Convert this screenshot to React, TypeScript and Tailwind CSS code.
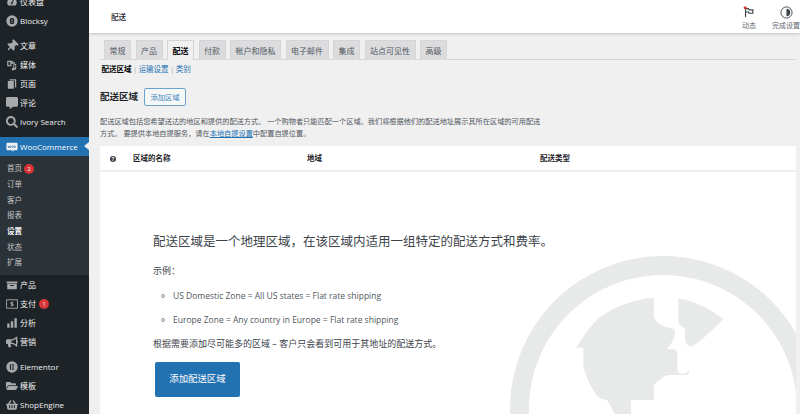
import React from "react";
import { FaThumbtack, FaCommentAlt, FaSearch, FaBullhorn, FaFolderOpen, FaShoppingBasket } from "react-icons/fa";

const I = ({ children }: { children: React.ReactNode }) => (
  <svg viewBox="0 0 20 20" className="w-[12px] h-[12px] fill-[#a7aaad]">{children}</svg>
);

const Dash = () => <I><path d="M10 3a8 8 0 0 0-8 8c0 2 .8 3.800 2 5h12a8 8 0 0 0 2-5 8 8 0 0 0-8-8zm1 9a1.500 1.500 0 1 1-2-1l3-5 1 .5z" /></I>;
const Blocksy = () => (
  <svg viewBox="0 0 20 20" className="w-[12px] h-[12px]">
    <circle cx="10" cy="10" r="9.500" fill="#a7aaad" />
    <rect x="6.500" y="5" width="7" height="10" rx="2.500" fill="#1d2327" />
    <rect x="8.800" y="7.300" width="2.400" height="1.800" fill="#a7aaad" />
    <rect x="8.800" y="11" width="2.400" height="1.800" fill="#a7aaad" />
  </svg>
);
const Media = () => <I><path d="M2 3h9v2.500h4V3h0v5H9v4H2zM4 5v5h3V5zM12 9l5-1v8a2 2 0 1 1-1.500-1.900V10l-2 .4V17a2 2 0 1 1-1.500-1.900z" /></I>;
const Pages = () => <I><path d="M6 2h11v14h-2V4H6zM3 5h10v13H3z" /></I>;
const Box = () => <I><path d="M1 4h18v3H1zM2 8h16v9H2zm5 2v1.500h6V10z" /></I>;
const Pay = () => (
  <svg viewBox="0 0 20 20" className="w-[12px] h-[12px] fill-none stroke-[#a7aaad]" strokeWidth="1.500">
    <rect x="1" y="3" width="18" height="14" />
    <path d="M12 7.500H9a1.200 1.200 0 0 0 0 2.500h2a1.200 1.200 0 0 1 0 2.500H8M10 6v8" />
  </svg>
);
const Bars = () => <I><path d="M2 11h4v7H2zM8 7h4v11H8zM14 2h4v16h-4z" /></I>;
const Elem = () => (
  <svg viewBox="0 0 20 20" className="w-[12px] h-[12px]">
    <circle cx="10" cy="10" r="9.500" fill="#a7aaad" />
    <path d="M6.500 5.500h2v9h-2zM10 5.500h3.500v2H10zM10 9h3.500v2H10zM10 12.500h3.500v2H10z" fill="#1d2327" />
  </svg>
);
const Woo = () => (
  <svg viewBox="0 0 20 20" className="w-[12px] h-[12px]">
    <path d="M2.500 3h15A1.800 1.800 0 0 1 19.300 4.800v9a1.800 1.800 0 0 1-1.800 1.800H12l.8 2.400-3.600-2.400H2.500A1.800 1.800 0 0 1 .7 13.800v-9A1.800 1.800 0 0 1 2.500 3z" fill="#f0f0f1" />
    <path d="M3.500 7.500l1 4 1.500-3 1 3 1.300-4M10 9.500a1.100 1.500 0 1 0 2.200 0a1.100 1.500 0 1 0-2.200 0M13.500 9.500a1.100 1.500 0 1 0 2.200 0a1.100 1.500 0 1 0-2.200 0" fill="none" stroke="#2271b1" strokeWidth="1" />
  </svg>
);

const fa = "w-[12px] h-[12px] text-[#a7aaad]";

const Row = ({ icon, label, badge }: { icon: React.ReactNode; label: string; badge?: string }) => (
  <div className="h-[19px] flex items-center text-[8px] text-[#f0f0f1]">
    <span className="w-[20px] pl-[4px] flex justify-center shrink-0">{icon}</span>
    <span>{label}</span>
    {badge && <span className="ml-[3px] w-[10px] h-[10px] rounded-full bg-[#d63638] text-white text-[5.500px] flex items-center justify-center">{badge}</span>}
  </div>
);

const Sub = ({ label, active, badge }: { label: string; active?: boolean; badge?: string }) => (
  <div className={active ? "h-[15.700px] pl-[7px] flex items-center text-[7.500px] text-white font-bold" : "h-[15.700px] pl-[7px] flex items-center text-[7.500px] text-[#c3c4c7]"}>
    <span>{label}</span>
    {badge && <span className="ml-[2px] w-[10px] h-[10px] rounded-full bg-[#d63638] text-white text-[5.500px] flex items-center justify-center">{badge}</span>}
  </div>
);

const tabs = ["常规", "产品", "配送", "付款", "帐户和隐私", "电子邮件", "集成", "站点可见性", "高级"];

export default function App() {
  return (
    <div className="w-[800px] h-[414px] overflow-hidden flex bg-[#f0f0f1] font-['Open_Sans','Noto_Sans_CJK_SC',sans-serif] text-[#3c434a]">
      <aside className="w-[89px] shrink-0 bg-[#1d2327] -mt-[8px] h-[430px] flex flex-col">
        <Row icon={<Dash />} label="仪表盘" />
        <Row icon={<Blocksy />} label="Blocksy" />
        <div className="h-[6px]" />
        <Row icon={<FaThumbtack className={`${fa} rotate-45`} />} label="文章" />
        <Row icon={<Media />} label="媒体" />
        <Row icon={<Pages />} label="页面" />
        <Row icon={<FaCommentAlt className={fa} />} label="评论" />
        <Row icon={<FaSearch className={fa} />} label="Ivory Search" />
        <div className="h-[6px]" />
        <div className="relative h-[19px] bg-[#2271b1] flex items-center text-[8px] text-white">
          <span className="w-[20px] pl-[4px] flex justify-center shrink-0"><Woo /></span>
          <span>WooCommerce</span>
          <span className="absolute right-0 top-[5px] w-0 h-0 border-y-[4.500px] border-y-transparent border-r-[5px] border-r-[#f0f0f1]" />
        </div>
        <div className="bg-[#2c3338] pt-[5px] pb-[4.500px]">
          <Sub label="首页" badge="2" />
          <Sub label="订单" />
          <Sub label="客户" />
          <Sub label="报表" />
          <Sub label="设置" active />
          <Sub label="状态" />
          <Sub label="扩展" />
        </div>
        <Row icon={<Box />} label="产品" />
        <Row icon={<Pay />} label="支付" badge="1" />
        <Row icon={<Bars />} label="分析" />
        <Row icon={<FaBullhorn className={fa} />} label="营销" />
        <div className="h-[6px]" />
        <Row icon={<Elem />} label="Elementor" />
        <Row icon={<FaFolderOpen className={fa} />} label="模板" />
        <Row icon={<FaShoppingBasket className={fa} />} label="ShopEngine" />
      </aside>

      <main className="flex-1 min-w-0 flex flex-col">
        <header className="relative z-10 h-[33px] shrink-0 bg-white shadow-[0_1px_3px_rgba(0,0,0,0.2)] flex items-center justify-between pl-[22px]">
          <span className="text-[7.500px] font-medium text-[#1d2327] mt-[2px]">配送</span>
          <div className="flex items-start pt-[4px]">
            <div className="w-[36px] flex flex-col items-center gap-[3px] text-[7px] text-[#646970]">
              <svg viewBox="0 0 14 14" className="w-[12px] h-[12px]">
                <path d="M3 2.500V13M3 3h3.500l.5 1.500h4.500v4H7l-.5-1.500H3" fill="none" stroke="#3c434a" strokeWidth="1.300" />
                <circle cx="2.500" cy="2" r="1.800" fill="#d63638" />
              </svg>
              <span>动态</span>
            </div>
            <div className="w-[5px]" />
            <div className="w-[28px] flex flex-col items-center gap-[2px] text-[7px] text-[#646970]">
              <svg viewBox="0 0 14 14" className="w-[13px] h-[13px]">
                <circle cx="7" cy="7" r="6" fill="none" stroke="#3c434a" strokeWidth="1" />
                <path d="M7 3a4 4 0 0 1 0 8z" fill="#3c434a" />
              </svg>
              <span className="whitespace-nowrap">完成设置</span>
            </div>
          </div>
        </header>

        <div className="pl-[11px] pr-[4px] flex-1 flex flex-col min-h-0">
          <nav className="mt-[7px] h-[20px] shrink-0 flex gap-[4.500px] pl-[4px] border-b border-[#d5d5d5]">
            {tabs.map((t) => (
              <span
                key={t}
                className={
                  t === "配送"
                    ? "h-[20px] px-[4.500px] flex items-center text-[8px] font-bold text-black bg-[#f0f0f1] border border-b-0 border-[#d5d5d5]"
                    : "h-[20px] px-[4.500px] flex items-center text-[8px] text-[#50575e] bg-[#dcdcde] border border-b-0 border-[#d5d5d5]"
                }
              >
                {t}
              </span>
            ))}
          </nav>

          <div className="mt-[4px] ml-[1.500px] h-[12px] flex items-center text-[7.500px] text-[#2271b1] shrink-0">
            <span className="font-bold text-black">配送区域</span>
            <span className="text-[#a7aaad] mx-[1.500px]">|</span>
            <span>运输设置</span>
            <span className="text-[#a7aaad] mx-[1.500px]">|</span>
            <span>类别</span>
          </div>

          <div className="mt-[12px] h-[18px] flex items-center gap-[6px] shrink-0">
            <h2 className="text-[9.500px] font-bold text-[#1d2327] mt-[1px]">配送区域</h2>
            <span className="h-[18px] w-[42px] flex items-center justify-center rounded-[2px] border border-[#6aa3d0] bg-[#f6f7f7] text-[7.300px] text-[#3f87c0]">添加区域</span>
          </div>

          <p className="mt-[9px] text-[7.200px] leading-[12px] text-[#50575e] shrink-0">
            配送区域包括您希望送达的地区和提供的配送方式。 一个购物者只能匹配一个区域。我们将根据他们的配送地址展示其所在区域的可用配送
            <br />
            方式。 要提供本地自提服务，请在<span className="text-[#2271b1] underline">本地自提设置</span>中配置自提位置。
          </p>

          <section className="relative mt-[7px] flex-1 bg-white overflow-hidden">
            <svg viewBox="100 146 696 268" className="absolute left-0 top-0 w-[696px] h-[268px]">
              <path
                fillRule="evenodd"
                fill="#e8e9e9"
                d="M663 256a153 153 0 1 1-.01 0zM663 275a134 134 0 1 0 .01 0z"
              />
              <path
                fill="#e8e9e9"
                d="M654 298.300V316.700Q656 324 667 327.300Q674 328 675 331Q676 338 667 349.300H674Q677.300 350 677.300 354V369Q678 374 683 374Q687 372 689 370.500Q690 374 686 375H668Q660 378 654 385V400H631V414H615L607 400Q600 399 597 396Q586 380 583.300 366V348.500Q580 346 576 348.500Q586 330 600 316.700Q620 303 647 298.300Z"
              />
              <path
                fill="#e8e9e9"
                d="M678.300 298.300Q702 302 723.300 319.300Q706 336 700 341Q693 347 689 346Q685 344 685 338V328Q682 328 680 325Q678.300 324 678.300 320Z"
              />
            </svg>

            <div className="relative">
              <div className="h-[26px] pt-[2px] flex items-center border-b-2 border-[#eeeeee] text-[7.500px] font-bold text-[#1d2327]">
                <span className="w-[33px] pl-[10px]">
                  <span className="block w-[6px] h-[6px] rounded-full bg-[#3c434a] text-white text-[5px] leading-[6px] text-center">?</span>
                </span>
                <span className="w-[174px]">区域的名称</span>
                <span className="w-[233px]">地域</span>
                <span>配送类型</span>
              </div>

              <div className="pl-[53px]">
                <h3 className="mt-[61px] text-[12.500px] leading-[18px] font-normal text-[#3c434a]">
                  配送区域是一个地理区域，在该区域内适用一组特定的配送方式和费率。
                </h3>
                <p className="mt-[13px] text-[9px] leading-[14px]">示例：</p>
                <ul className="mt-[12px] text-[8.500px] leading-[12px] text-[#50575e]">
                  <li className="flex items-center h-[12px]">
                    <span className="ml-[8px] mr-[8px] w-[4px] h-[4px] rounded-full border border-[#8c8f94]" />
                    US Domestic Zone = All US states = Flat rate shipping
                  </li>
                  <li className="flex items-center h-[12px] mt-[12px]">
                    <span className="ml-[8px] mr-[8px] w-[4px] h-[4px] rounded-full border border-[#8c8f94]" />
                    Europe Zone = Any country in Europe = Flat rate shipping
                  </li>
                </ul>
                <p className="mt-[11px] text-[9px] leading-[14px]">根据需要添加尽可能多的区域 – 客户只会看到可用于其地址的配送方式。</p>
                <span className="mt-[11px] ml-[2px] w-[85px] h-[35px] flex items-center justify-center rounded-[2px] bg-[#2271b1] text-white text-[9.400px]">添加配送区域</span>
              </div>
            </div>
          </section>
        </div>
      </main>
    </div>
  );
}
